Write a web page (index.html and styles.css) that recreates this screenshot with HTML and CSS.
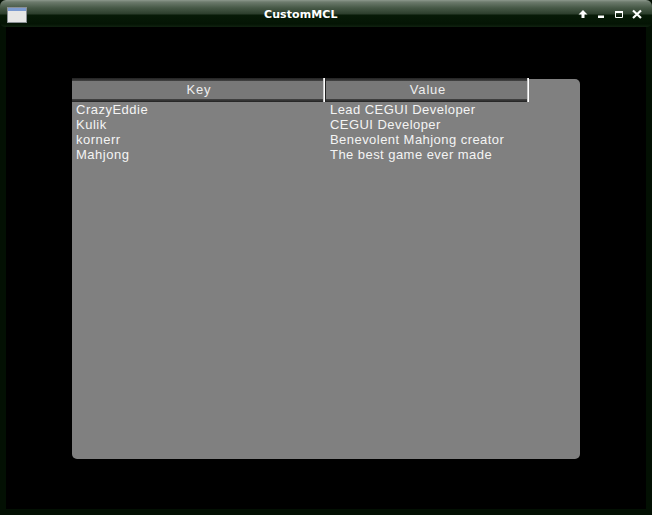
FILE: index.html
```html
<!DOCTYPE html>
<html lang="en">
<head>
    <meta charset="UTF-8">
    <title>CustomMCL</title>
    <link rel="stylesheet" href="styles.css">
</head>
<body>
    <div class="window">
        <div class="titlebar">
            <svg class="app-icon" width="20" height="16" viewBox="0 0 20 16">
                <rect x="0.5" y="0.5" width="19" height="15" fill="#e6e6e6" stroke="#8a8f94"/>
                <rect x="1" y="1" width="18" height="3" fill="#7b9ad0"/>
            </svg>
            <div class="title">CustomMCL</div>
            <div class="buttons">
                <svg width="18" height="12" viewBox="0 0 18 12">
                    <path d="M9 1 L13.5 5.5 H10.5 V9 H7.5 V5.5 H4.5 Z" fill="#fff"/>
                </svg>
                <svg width="18" height="12" viewBox="0 0 18 12">
                    <rect x="6" y="6.5" width="6" height="2.5" fill="#fff"/>
                </svg>
                <svg width="18" height="12" viewBox="0 0 18 12">
                    <path d="M5.5 2.5 H12.5 V8.5 H5.5 Z" fill="none" stroke="#fff" stroke-width="1"/>
                    <rect x="5" y="2" width="8" height="2" fill="#fff"/>
                </svg>
                <svg width="18" height="12" viewBox="0 0 18 12">
                    <path d="M5 1.5 L13 9 M13 1.5 L5 9" fill="none" stroke="#fff" stroke-width="2.2"/>
                </svg>
            </div>
        </div>
        <div class="content">
            <div class="panel">
                <div class="list-header">
                    <div class="col-head col-key">Key</div>
                    <div class="col-head col-value">Value</div>
                </div>
                <div class="list-rows">
                    <div class="row"><span class="cell-key">CrazyEddie</span><span class="cell-value">Lead CEGUI Developer</span></div>
                    <div class="row"><span class="cell-key">Kulik</span><span class="cell-value">CEGUI Developer</span></div>
                    <div class="row"><span class="cell-key">kornerr</span><span class="cell-value">Benevolent Mahjong creator</span></div>
                    <div class="row"><span class="cell-key">Mahjong</span><span class="cell-value">The best game ever made</span></div>
                </div>
            </div>
        </div>
    </div>
</body>
</html>
```
FILE: styles.css
```css
html, body {
    margin: 0;
    padding: 0;
    background-color: #000;
}

.window {
    width: 652px;
    height: 515px;
    box-sizing: border-box;
    display: flex;
    flex-direction: column;
    background-color: #031003;
    font-family: "Liberation Sans", Arial, sans-serif;
    color: #fff;
    overflow: hidden;
}

.titlebar {
    height: 27px;
    flex: none;
    display: flex;
    align-items: center;
    padding: 0 6px 0 7px;
    border-radius: 6px 6px 5px 5px;
    background: linear-gradient(to bottom, #8d998d 0, #6d7b6d 2px, #465846 8px, #2c3e2c 14px, #071a07 15px, #041404 24px, #102210 27px);
}

.app-icon {
    margin-top: 2px;
}

.title {
    margin-left: 237px;
    padding-top: 2px;
    font-family: "DejaVu Sans", sans-serif;
    font-size: 11px;
    font-weight: bold;
    letter-spacing: 0.1px;
}

.buttons {
    margin-left: auto;
    display: flex;
    align-items: center;
    padding-top: 3px;
}

.content {
    flex: 1;
    margin: 0 6px 6px 6px;
    background-color: #000;
    padding: 52px 66px 50px 66px;
}

.panel {
    height: 380px;
    width: 508px;
    display: flex;
    flex-direction: column;
    background-color: #808080;
    border-radius: 0 5px 5px 5px;
}

.list-header {
    display: flex;
    height: 24px;
    flex: none;
    margin-top: -1px;
}

.col-head {
    box-sizing: border-box;
    height: 24px;
    padding-left: 2px;
    text-align: center;
    font-size: 13px;
    letter-spacing: 0.8px;
    line-height: 24px;
    background: linear-gradient(to bottom, #222 0, #444 3px, #787878 3px, #787878 21px, #444 21px, #222 24px);
    border-right: 1px solid #fff;
    box-shadow: inset -1px 0 0 #ccc;
    color: #eee;
}

.col-key {
    width: 253px;
}

.col-value {
    width: 204px;
    border-left: 1px solid #222;
}

.list-rows {
    padding: 0 0 0 4px;
}

.row {
    display: flex;
    height: 15px;
    line-height: 15px;
    font-size: 13px;
    letter-spacing: 0.5px;
    color: #f4f4f4;
}

.cell-key {
    width: 254px;
}

.cell-value {
    letter-spacing: 0.45px;
}
```
